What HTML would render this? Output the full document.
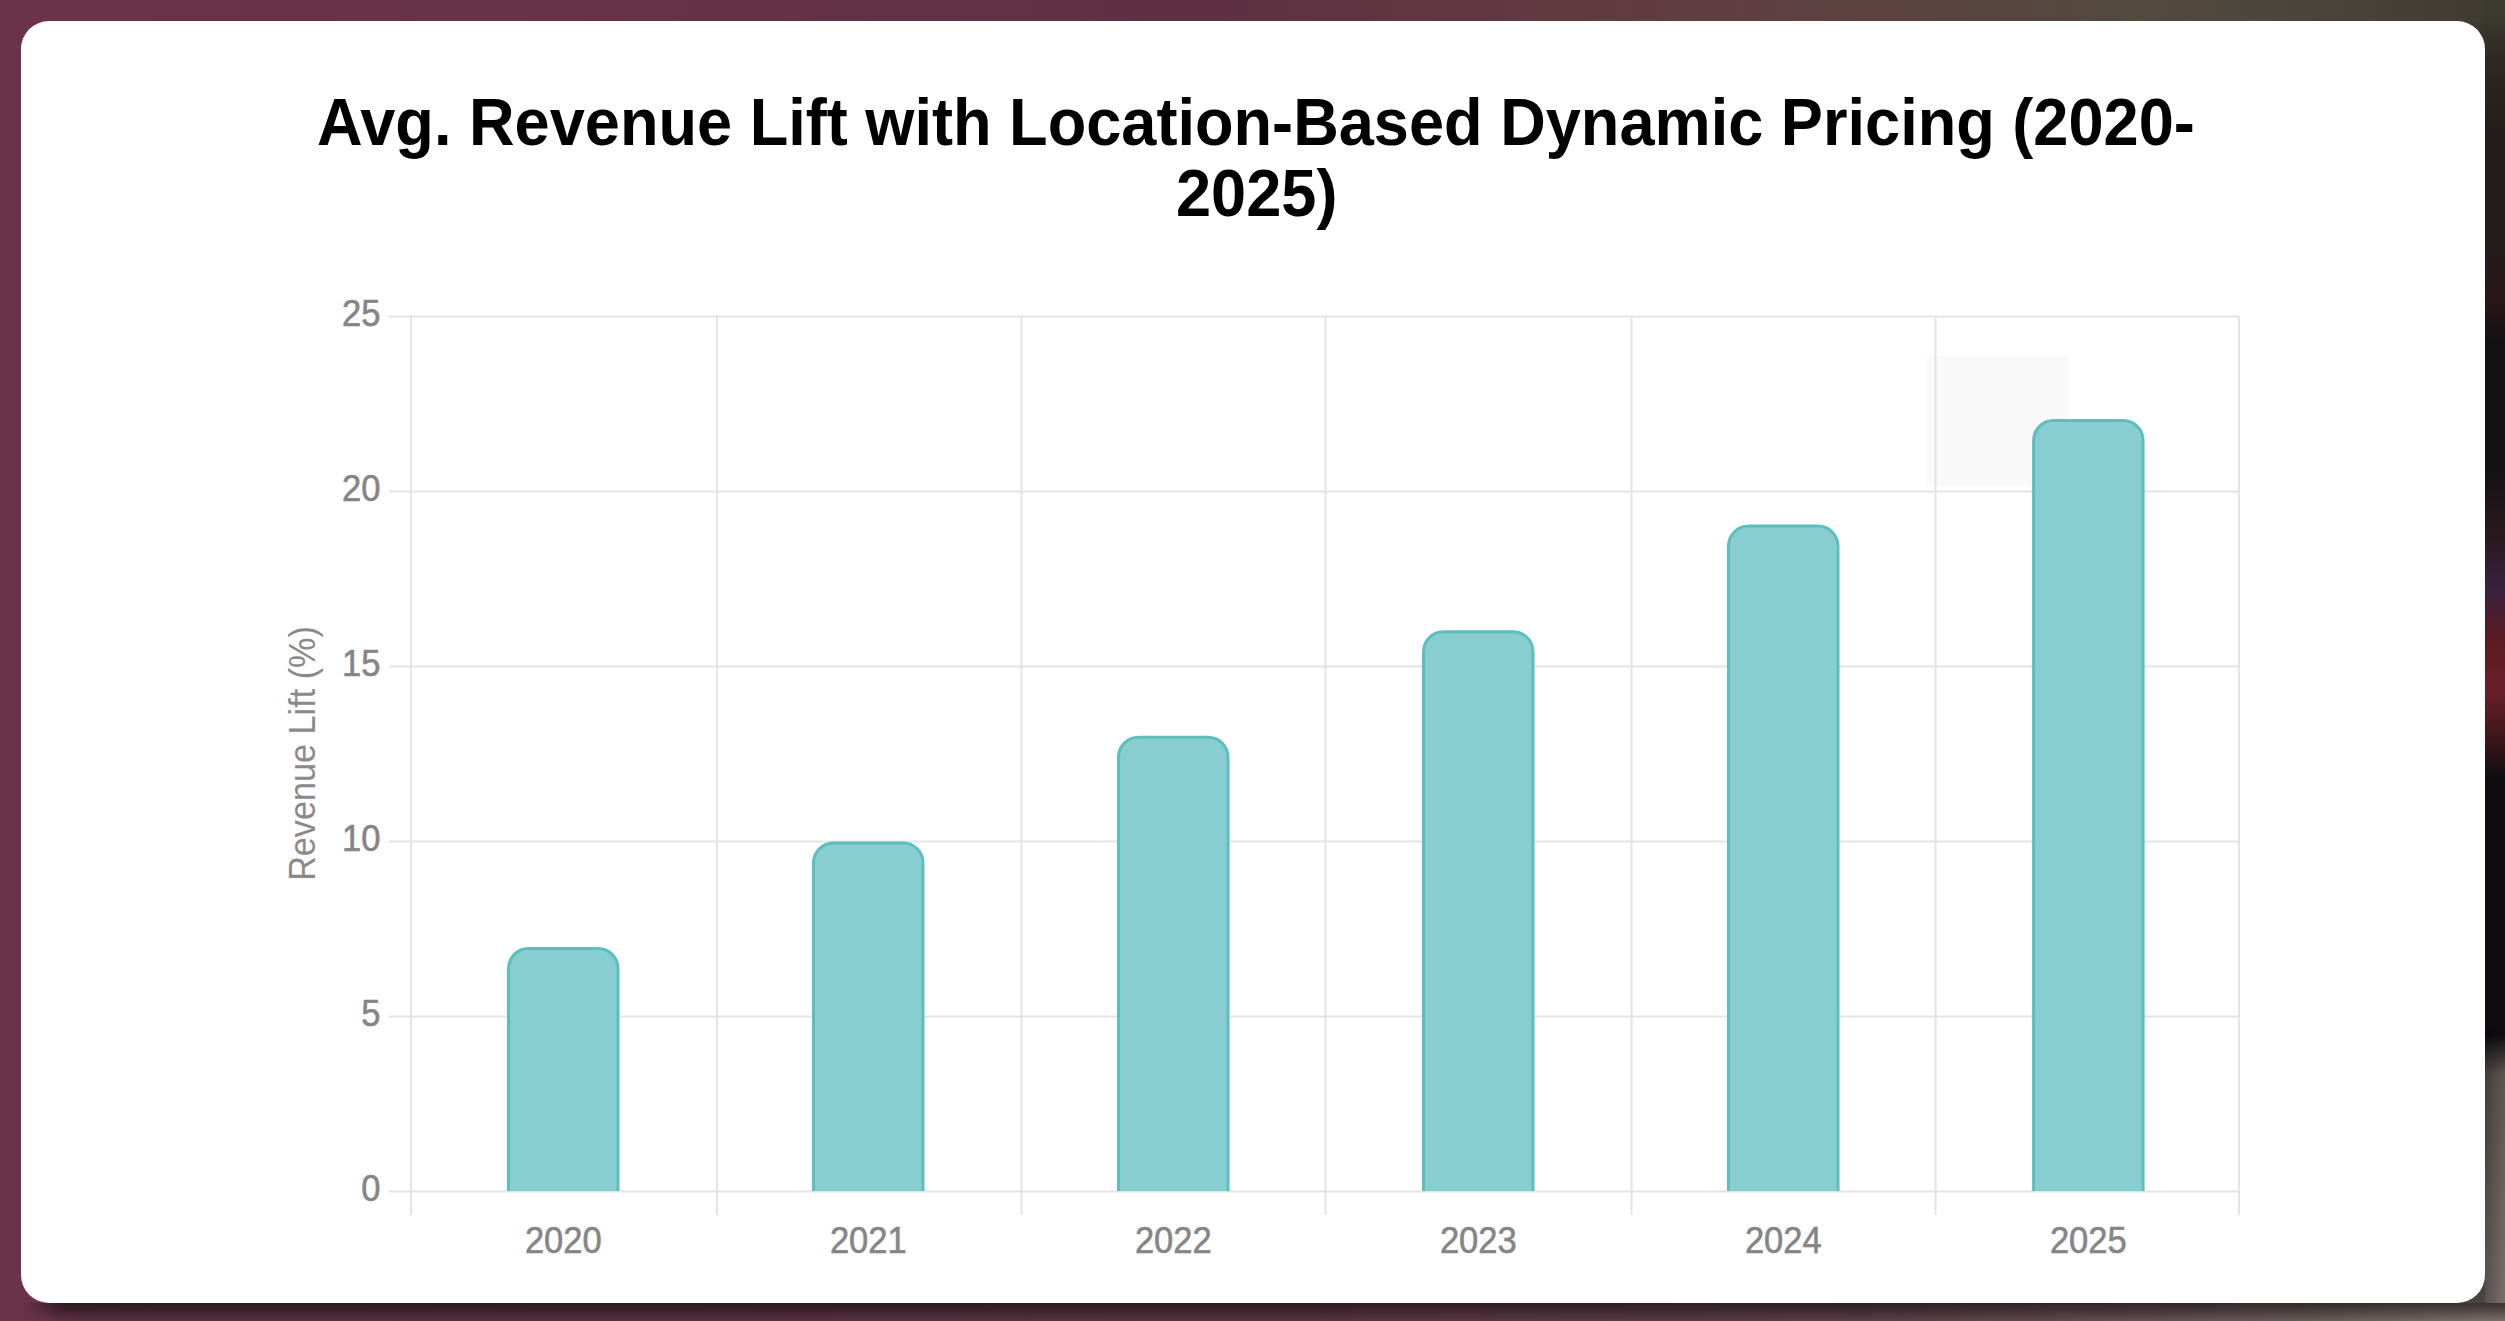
<!DOCTYPE html>
<html>
<head>
<meta charset="utf-8">
<style>
html,body{margin:0;padding:0;}
body{width:2505px;height:1321px;overflow:hidden;position:relative;
  background:linear-gradient(90deg,#6b3349 0%,#683248 20%,#633145 35%,#5e3042 48%,#623a42 62%,#5c4241 75%,#524a3e 86%,#48423a 94%,#3d3a30 100%);
  font-family:"Liberation Sans",sans-serif;}
.bg{position:absolute;}
#rs{left:2485px;top:0;width:20px;height:1303px;
  background:linear-gradient(90deg,rgba(0,0,0,0.28) 0px,rgba(0,0,0,0) 20px) 0 1030px/100% 273px no-repeat,
  linear-gradient(180deg,#3d3a30 0px,#3d3a30 14px,#2e2824 61px,#221c1a 141px,#221c1a 250px,#2a1618 300px,#141114 340px,#141114 470px,#2a1a20 540px,#3a2040 590px,#5a1a20 640px,#6a2028 690px,#3a161a 740px,#0e0c10 780px,#0e0c10 1035px,#5e5652 1075px,#6e6460 1201px,#7a706a 1303px);}
#tr{left:2455px;top:21px;width:30px;height:30px;background:linear-gradient(180deg,#3d3a30 0px,#322c26 30px);}
#cr{left:2455px;top:1273px;width:30px;height:30px;background:#4a4440;}
#bs{left:0;top:1303px;width:2505px;height:18px;
  background:linear-gradient(90deg,#6a3349 0px,#6a3349 22px,rgba(106,51,73,0) 60px),
  linear-gradient(180deg,rgba(20,10,14,0.6) 0px,rgba(20,10,14,0.4) 7px,rgba(20,10,14,0.0) 18px),
  linear-gradient(90deg,#6a3349 0px,#6a3349 30px,#5a3040 70px,#573040 600px,#583440 1300px,#5a4048 1900px,#675a58 2300px,#7a706a 2505px);}
#card{position:absolute;left:21px;top:21px;width:2464px;height:1282px;background:#fff;border-radius:28px;}
.t{position:absolute;white-space:nowrap;font-weight:bold;color:#000;font-size:63px;line-height:1;transform:scale(1.002,1.047);transform-origin:0 0;}
svg{position:absolute;left:0;top:0;}
</style>
</head>
<body>
<div class="bg" id="bs"></div>
<div class="bg" id="rs"></div>
<div class="bg" id="cr"></div>
<div class="bg" id="tr"></div>
<div id="card"></div>
<div class="t" style="left:317.2px;top:89.5px;">Avg. Revenue Lift with Location-Based Dynamic Pricing (2020-</div>
<div class="t" style="left:1175.5px;top:160.7px;">2025)</div>
<svg width="2505" height="1321" viewBox="0 0 2505 1321">
  <rect x="1927" y="356" width="142" height="130" fill="#f9f9f9"/>
  <g stroke="#e4e4e4" stroke-width="2" fill="none"><line x1="389" y1="316.5" x2="2239" y2="316.5"/><line x1="389" y1="491.5" x2="2239" y2="491.5"/><line x1="389" y1="666.5" x2="2239" y2="666.5"/><line x1="389" y1="841.5" x2="2239" y2="841.5"/><line x1="389" y1="1016.5" x2="2239" y2="1016.5"/><line x1="389" y1="1191.5" x2="2239" y2="1191.5"/><line x1="411" y1="316.5" x2="411" y2="1215"/><line x1="717" y1="316.5" x2="717" y2="1215"/><line x1="1021.5" y1="316.5" x2="1021.5" y2="1215"/><line x1="1325.5" y1="316.5" x2="1325.5" y2="1215"/><line x1="1631.5" y1="316.5" x2="1631.5" y2="1215"/><line x1="1935.5" y1="316.5" x2="1935.5" y2="1215"/><line x1="2239" y1="316.5" x2="2239" y2="1215"/></g>
  <g fill="#88cdcf" stroke="#5cbfbf" stroke-width="3">
    <path d="M508.5,1191 V968.5 A20,20 0 0 1 528.5,948.5 H598.0 A20,20 0 0 1 618.0,968.5 V1191"/>
    <path d="M813.5,1191 V862.9 A20,20 0 0 1 833.5,842.9 H903.0 A20,20 0 0 1 923.0,862.9 V1191"/>
    <path d="M1118.5,1191 V757.3 A20,20 0 0 1 1138.5,737.3 H1208.0 A20,20 0 0 1 1228.0,757.3 V1191"/>
    <path d="M1423.5,1191 V651.7 A20,20 0 0 1 1443.5,631.7 H1513.0 A20,20 0 0 1 1533.0,651.7 V1191"/>
    <path d="M1728.5,1191 V546.1 A20,20 0 0 1 1748.5,526.1 H1818.0 A20,20 0 0 1 1838.0,546.1 V1191"/>
    <path d="M2033.6,1191 V440.5 A20,20 0 0 1 2053.6,420.5 H2123.1 A20,20 0 0 1 2143.1,440.5 V1191"/>
  </g>
  <g font-family="Liberation Sans" font-size="36" fill="#858585" stroke="#858585" stroke-width="0.6" text-anchor="end">
    <text transform="translate(380.5,326.0) scale(0.96,1)">25</text>
    <text transform="translate(380.5,501.0) scale(0.96,1)">20</text>
    <text transform="translate(380.5,676.0) scale(0.96,1)">15</text>
    <text transform="translate(380.5,851.0) scale(0.96,1)">10</text>
    <text transform="translate(380.5,1026.0) scale(0.96,1)">5</text>
    <text transform="translate(380.5,1201.0) scale(0.96,1)">0</text>
  </g>
  <g font-family="Liberation Sans" font-size="36" fill="#858585" stroke="#858585" stroke-width="0.6" text-anchor="middle">
    <text transform="translate(563.3,1253) scale(0.96,1)">2020</text>
    <text transform="translate(868.3,1253) scale(0.96,1)">2021</text>
    <text transform="translate(1173.3,1253) scale(0.96,1)">2022</text>
    <text transform="translate(1478.3,1253) scale(0.96,1)">2023</text>
    <text transform="translate(1783.3,1253) scale(0.96,1)">2024</text>
    <text transform="translate(2088.3,1253) scale(0.96,1)">2025</text>
  </g>
  <text transform="translate(315,753.5) rotate(-90) scale(0.95,1)" font-family="Liberation Sans" font-size="36" fill="#8a8a8a" text-anchor="middle">Revenue Lift (%)</text>
</svg>
</body>
</html>
